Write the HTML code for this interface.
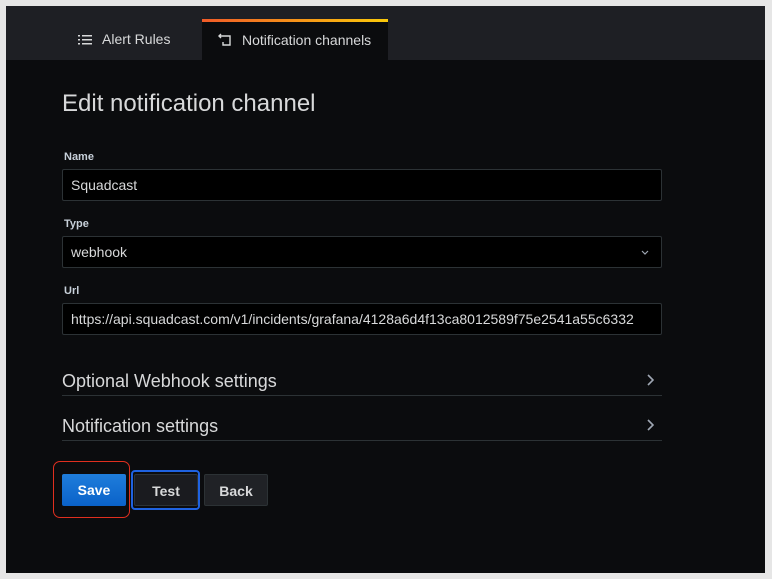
<!DOCTYPE html>
<html><head><style>
*{box-sizing:border-box;margin:0;padding:0}
body{width:772px;height:579px;background:#e6e6e6;font-family:"Liberation Sans",sans-serif;position:relative;overflow:hidden}
.main{position:absolute;left:6px;top:6px;width:759px;height:567px;background:#0b0c0e}
.bar{position:absolute;left:0;top:0;width:759px;height:54px;background:#1e1f24}
.abs{position:absolute}
.tab{position:absolute;top:13px;height:41px;color:#d8d9da;font-size:14px;line-height:41px}
.active{left:196px;width:186px;background:#0b0c0e;border-top:3px solid;border-image:linear-gradient(90deg,#f05a28,#fbca0a) 1;line-height:37px}
h1{position:absolute;left:56px;top:84px;font-size:24px;font-weight:normal;color:#d8d9da}
.lbl{position:absolute;left:58px;font-size:11px;font-weight:bold;color:#c7d0d9}
.inp{position:absolute;left:56px;width:600px;height:32px;background:#000;border:1px solid #2c3235;border-radius:2px;color:#d8d9da;font-size:14px;line-height:30px;padding-left:8px}
.sec{position:absolute;left:56px;width:600px;height:30px;border-bottom:1px solid #2c3235;color:#d8d9da;font-size:18px;padding-top:5px}
.btn{position:absolute;top:468px;height:32px;border-radius:2px;color:#d8d9da;font-weight:bold;font-size:14px;line-height:32px;text-align:center}
</style></head><body>
<div class="main">
<div class="bar"></div>
<div class="tab" style="left:72px">
<svg class="abs" style="left:0;top:15px" width="14" height="12"><g fill="#d8d9da"><rect x="0" y="1" width="2" height="1.5"/><rect x="4" y="1" width="10" height="1.5"/><rect x="0" y="5" width="2" height="1.5"/><rect x="4" y="5" width="10" height="1.5"/><rect x="0" y="9" width="2" height="1.5"/><rect x="4" y="9" width="10" height="1.5"/></g></svg>
<span style="margin-left:24px">Alert Rules</span></div>
<div class="tab active">
<svg class="abs" style="left:16px;top:11px" width="14" height="14" fill="none" stroke="#d8d9da" stroke-width="1.4"><path d="M1 3h6l0 0M3 1L1 3l2 2M7 3h5v9H5V9"/></svg>
<span style="margin-left:40px">Notification channels</span></div>
<h1>Edit notification channel</h1>
<div class="lbl" style="top:145px">Name</div>
<div class="inp" style="top:163px">Squadcast</div>
<div class="lbl" style="top:212px">Type</div>
<div class="inp" style="top:230px">webhook<svg class="abs" style="right:12px;top:13px" width="8" height="6" fill="none" stroke="#9fa7b3" stroke-width="1.2"><path d="M1 1l3 3 3-3"/></svg></div>
<div class="lbl" style="top:279px">Url</div>
<div class="inp" style="top:297px">https://api.squadcast.com/v1/incidents/grafana/4128a6d4f13ca8012589f75e2541a55c6332</div>
<div class="sec" style="top:360px">Optional Webhook settings<svg class="abs" style="right:8px;top:8px" width="8" height="12" fill="none" stroke="#9fa7b3" stroke-width="1.6"><path d="M2 1l5 5-5 5"/></svg></div>
<div class="sec" style="top:405px">Notification settings<svg class="abs" style="right:8px;top:8px" width="8" height="12" fill="none" stroke="#9fa7b3" stroke-width="1.6"><path d="M2 1l5 5-5 5"/></svg></div>
<div class="abs" style="left:47px;top:455px;width:77px;height:57px;border:1px solid #e02f1f;border-radius:7px"></div>
<div class="btn" style="left:56px;width:64px;background:linear-gradient(#1f7ddb,#0a62c9);color:#fff">Save</div>
<div class="abs" style="left:125px;top:464px;width:69px;height:40px;border:2px solid #1f62e0;border-radius:4px"></div>
<div class="btn" style="left:128px;width:64px;background:#1a1b1f;border:1px solid #2c3235">Test</div>
<div class="btn" style="left:198px;width:64px;background:#202226;border:1px solid #2c3235">Back</div>
</div>
</body></html>
